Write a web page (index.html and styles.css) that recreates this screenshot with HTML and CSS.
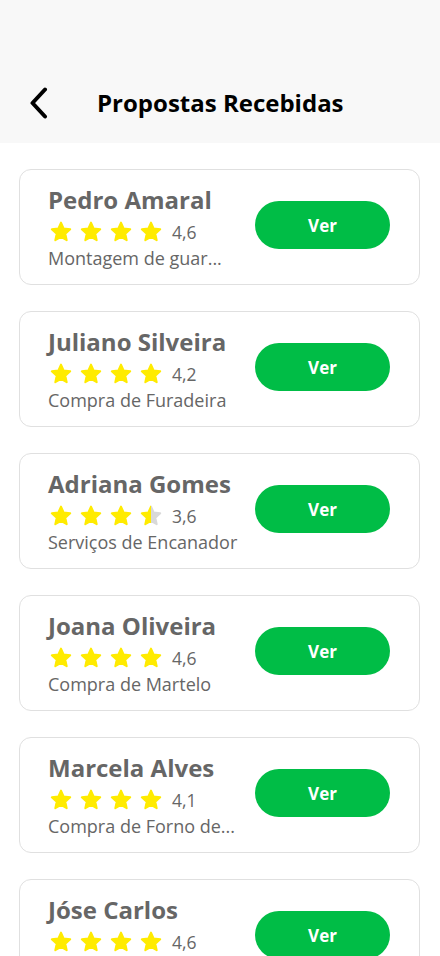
FILE: index.html
```html
<!DOCTYPE html>
<html lang="pt-BR">
<head>
<meta charset="utf-8">
<title>Propostas Recebidas</title>
<link rel="stylesheet" href="styles.css">
</head>
<body>
<svg width="0" height="0" class="defs">
  <defs>
    <symbol id="star" viewBox="0 0 24 24">
      <path d="M12 2.6 L14.7 8.6 L21.2 9.3 L16.3 13.7 L17.7 20.2 L12 16.9 L6.3 20.2 L7.7 13.7 L2.8 9.3 L9.3 8.6 Z" stroke-linejoin="round" stroke-width="2"/>
    </symbol>
    <linearGradient id="half" x1="0" y1="0" x2="1" y2="0">
      <stop offset="0.5" stop-color="#ffeb00"/>
      <stop offset="0.5" stop-color="#d9d9d9"/>
    </linearGradient>
  </defs>
</svg>
<header class="header">
  <svg class="back" width="22" height="32" viewBox="0 0 22 32">
    <path d="M17 2.5 L4.5 16 L17 29.5" fill="none" stroke="#000" stroke-width="4" stroke-linecap="round" stroke-linejoin="round"/>
  </svg>
  <h1 class="title">Propostas Recebidas</h1>
</header>
<main class="list">
  <div class="card">
    <div class="info">
      <div class="name">Pedro Amaral</div>
      <div class="rating">
        <svg class="star full"><use href="#star"/></svg><svg class="star full"><use href="#star"/></svg><svg class="star full"><use href="#star"/></svg><svg class="star full"><use href="#star"/></svg>
        <span class="score">4,6</span>
      </div>
      <div class="desc">Montagem de guar...</div>
    </div>
    <button class="btn">Ver</button>
  </div>
  <div class="card">
    <div class="info">
      <div class="name">Juliano Silveira</div>
      <div class="rating">
        <svg class="star full"><use href="#star"/></svg><svg class="star full"><use href="#star"/></svg><svg class="star full"><use href="#star"/></svg><svg class="star full"><use href="#star"/></svg>
        <span class="score">4,2</span>
      </div>
      <div class="desc">Compra de Furadeira</div>
    </div>
    <button class="btn">Ver</button>
  </div>
  <div class="card">
    <div class="info">
      <div class="name">Adriana Gomes</div>
      <div class="rating">
        <svg class="star full"><use href="#star"/></svg><svg class="star full"><use href="#star"/></svg><svg class="star full"><use href="#star"/></svg><svg class="star halfstar"><use href="#star"/></svg>
        <span class="score">3,6</span>
      </div>
      <div class="desc">Serviços de Encanador</div>
    </div>
    <button class="btn">Ver</button>
  </div>
  <div class="card">
    <div class="info">
      <div class="name">Joana Oliveira</div>
      <div class="rating">
        <svg class="star full"><use href="#star"/></svg><svg class="star full"><use href="#star"/></svg><svg class="star full"><use href="#star"/></svg><svg class="star full"><use href="#star"/></svg>
        <span class="score">4,6</span>
      </div>
      <div class="desc">Compra de Martelo</div>
    </div>
    <button class="btn">Ver</button>
  </div>
  <div class="card">
    <div class="info">
      <div class="name">Marcela Alves</div>
      <div class="rating">
        <svg class="star full"><use href="#star"/></svg><svg class="star full"><use href="#star"/></svg><svg class="star full"><use href="#star"/></svg><svg class="star full"><use href="#star"/></svg>
        <span class="score">4,1</span>
      </div>
      <div class="desc">Compra de Forno de...</div>
    </div>
    <button class="btn">Ver</button>
  </div>
  <div class="card">
    <div class="info">
      <div class="name">Jóse Carlos</div>
      <div class="rating">
        <svg class="star full"><use href="#star"/></svg><svg class="star full"><use href="#star"/></svg><svg class="star full"><use href="#star"/></svg><svg class="star full"><use href="#star"/></svg>
        <span class="score">4,6</span>
      </div>
      <div class="desc">Compra de Serra</div>
    </div>
    <button class="btn">Ver</button>
  </div>
</main>
</body>
</html>
```

FILE: styles.css
```css
* { box-sizing: border-box; }
html, body { margin: 0; padding: 0; }
body {
  background: #fff;
  font-family: "Open Sans", "Noto Sans", sans-serif;
  width: 440px;
  height: 956px;
  overflow: hidden;
}
.defs { position: absolute; }
.header {
  background: #f8f8f8;
  height: 143px;
  padding: 87px 0 24px 28px;
  display: flex;
  align-items: center;
}
.back { display: block; flex: none; }
.title {
  margin: 0 0 0 47px;
  font-size: 24px;
  line-height: 32px;
  font-weight: 700;
  color: #000;
}
.list {
  padding: 26px 20px 0 19px;
  display: flex;
  flex-direction: column;
  gap: 26px;
}
.card {
  height: 116px;
  border: 1px solid #e0e0e0;
  border-radius: 12px;
  padding: 14px 29px 16px 28px;
  display: flex;
  align-items: center;
  justify-content: space-between;
  background: #fff;
}
.info { display: flex; flex-direction: column; align-self: flex-start; }
.name {
  font-size: 24px;
  line-height: 32px;
  font-weight: 700;
  color: #666;
  white-space: nowrap;
}
.rating {
  margin-top: 4px;
  height: 24px;
  display: flex;
  align-items: center;
  gap: 6px;
  padding-left: 1px;
}
.star { width: 24px; height: 24px; display: block; }
.star.full { fill: #ffeb00; stroke: #ffeb00; }
.star.halfstar { fill: url(#half); stroke: url(#half); }
.score {
  margin-left: 3px;
  font-size: 17.5px;
  line-height: 24px;
  color: #666;
}
.desc {
  margin-top: 2px;
  font-size: 18px;
  line-height: 24px;
  color: #666;
  white-space: nowrap;
}
.btn {
  width: 135px;
  height: 48px;
  border: none;
  border-radius: 24px;
  background: #00bd46;
  color: #fff;
  font-family: "Open Sans", "Noto Sans", sans-serif;
  font-size: 17px;
  font-weight: 700;
  margin-bottom: 2px;
  flex: none;
}
```
